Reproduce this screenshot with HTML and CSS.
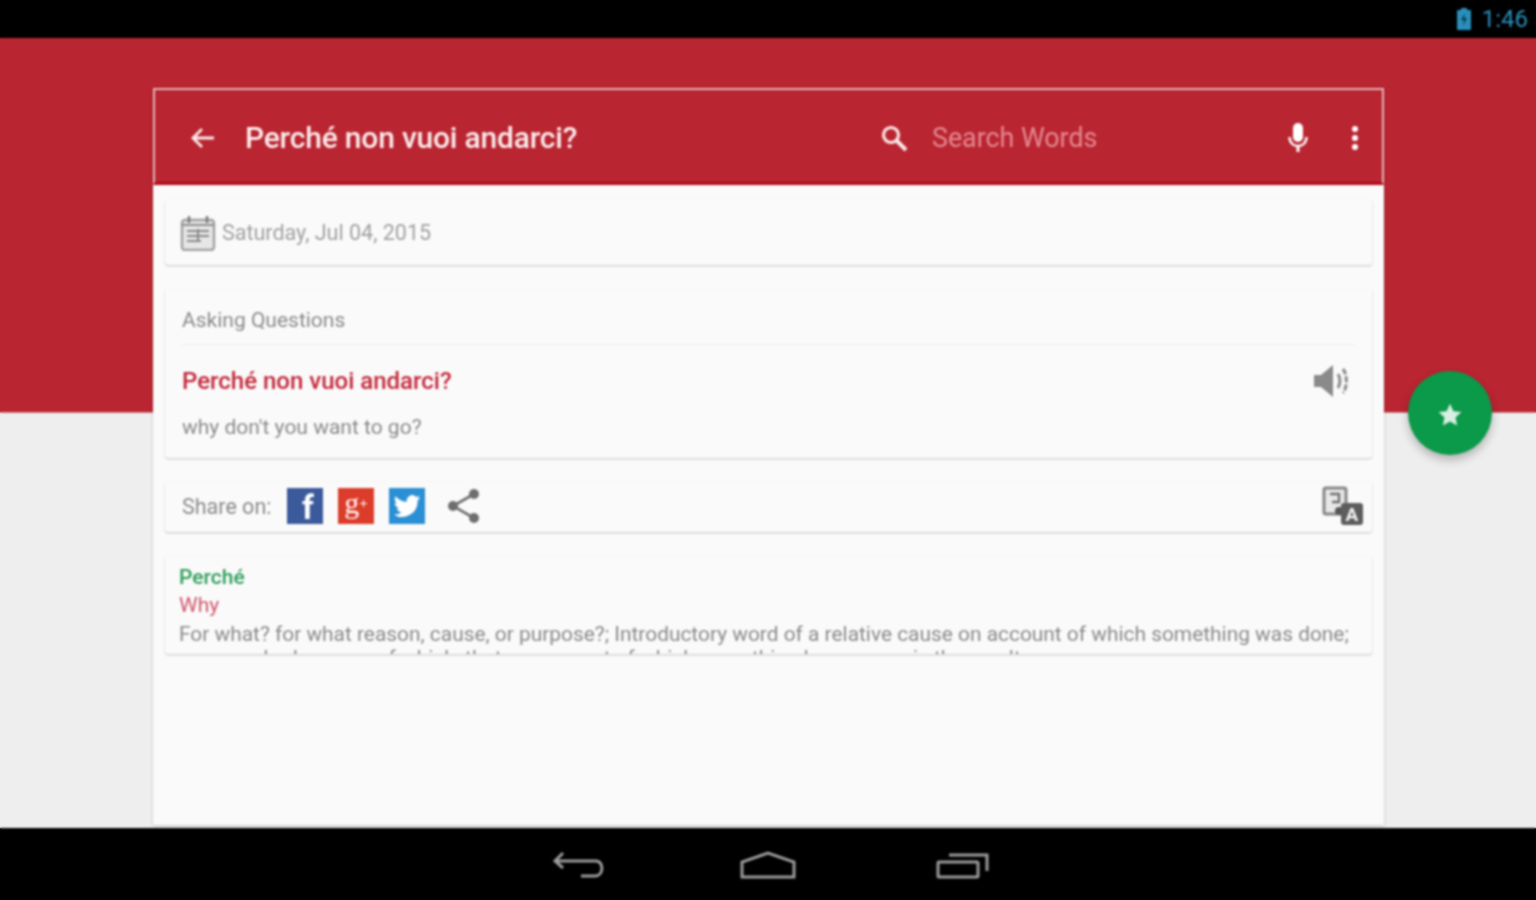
FILE: index.html
```html
<!DOCTYPE html>
<html lang="en">

<head>
    <meta charset="UTF-8">
    <meta name="viewport" content="width=device-width, initial-scale=1.0">
    <title>Perché non vuoi andarci?</title>
    <link rel="stylesheet" href="styles.css">
</head>

<body>

    <div class="screen">
        <div class="status-bar">
            <svg class="status-bar__battery" viewBox="0 0 16 24" width="16" height="24">
                <path d="M5 1h6v2h3a1 1 0 0 1 1 1v18a1 1 0 0 1-1 1H2a1 1 0 0 1-1-1V4a1 1 0 0 1 1-1h3z" fill="#2a8fbb" />
                <path d="M9 6 5 13h3l-1 6 4-8H8z" fill="#0b3a50" />
            </svg>
            <span class="status-bar__time">1:46</span>
        </div>

        <div class="content">
            <div class="panel">
                <div class="toolbar">
                    <svg class="toolbar__back" viewBox="0 0 28 24" width="28" height="24">
                        <path d="M25 12H5M13 3l-9 9 9 9" fill="none" stroke="#fbecec" stroke-width="2.800" />
                    </svg>
                    <div class="toolbar__title">Perché non vuoi andarci?</div>
                    <svg class="toolbar__search-icon" viewBox="0 0 30 30" width="30" height="30">
                        <circle cx="12" cy="12" r="7.500" fill="none" stroke="#fbe6e6" stroke-width="3.200" />
                        <path d="M17.500 17.500 27 27" stroke="#fbe6e6" stroke-width="4" />
                    </svg>
                    <div class="toolbar__search">Search Words</div>
                    <svg class="toolbar__mic" viewBox="0 0 24 32" width="24" height="32">
                        <rect x="7" y="1" width="10" height="19" rx="5" fill="#fff" />
                        <path d="M3.500 15c0 6 4 9 8.500 9s8.500-3 8.500-9" fill="none" stroke="#fff" stroke-width="2.400" />
                        <path d="M10.500 23h3v7h-3z" fill="#fff" />
                    </svg>
                    <div class="toolbar__more">
                        <span></span><span></span><span></span>
                    </div>
                </div>

                <div class="card card--date">
                    <svg class="date-icon" viewBox="0 0 36 36" width="36" height="36">
                        <rect x="2" y="5" width="32" height="30" rx="3" fill="#e6e6e6" stroke="#a0a0a0" stroke-width="2.400" />
                        <path d="M2 10h32" stroke="#8e8e8e" stroke-width="2" />
                        <path d="M9 1v7M27 1v7" stroke="#777" stroke-width="2.400" />
                        <path d="M7 16h22M7 21h22M7 26h14M18 14v12" stroke="#8a8a8a" stroke-width="2" />
                    </svg>
                    <span class="date-text">Saturday, Jul 04, 2015</span>
                </div>

                <div class="card card--phrase">
                    <div class="phrase-category">Asking Questions</div>
                    <div class="phrase-row">
                        <div class="phrase-text">Perché non vuoi andarci?</div>
                        <svg class="speaker" viewBox="0 0 38 34" width="38" height="34">
                            <path d="M1 11h7l12-10v32L8 23H1z" fill="#8a8a8a" />
                            <path d="M25 10c2.500 4 2.500 10 0 14" fill="none" stroke="#8a8a8a" stroke-width="3" />
                            <path d="M30 5c4.500 6 4.500 18 0 24" fill="none" stroke="#8a8a8a" stroke-width="3" stroke-dasharray="6 2" />
                        </svg>
                    </div>
                    <div class="phrase-meaning">why don't you want to go?</div>
                </div>

                <div class="card card--share">
                    <span class="share-label">Share on:</span>
                    <div class="share-icon share-icon--facebook">f</div>
                    <div class="share-icon share-icon--google">g<span class="share-icon__plus">+</span></div>
                    <div class="share-icon share-icon--twitter">
                        <svg viewBox="0 0 24 24" width="32" height="32">
                            <path d="M22 5.800c-.7.3-1.500.5-2.300.6.8-.5 1.500-1.300 1.800-2.200-.8.500-1.700.8-2.600 1a4.100 4.100 0 0 0-7 3.700C8.500 8.700 5.500 7.100 3.400 4.600a4.100 4.100 0 0 0 1.300 5.500c-.7 0-1.300-.2-1.900-.5 0 2 1.400 3.700 3.300 4.100-.6.200-1.200.2-1.800.1.500 1.600 2 2.800 3.800 2.800A8.300 8.300 0 0 1 2 18.300a11.600 11.600 0 0 0 17.900-10.300c.8-.6 1.500-1.300 2.100-2.200z" fill="#fff" />
                        </svg>
                    </div>
                    <svg class="share-generic" viewBox="0 0 36 36" width="36" height="36">
                        <path d="M28 6 7 18l21 12" fill="none" stroke="#6e6e6e" stroke-width="2.600" />
                        <circle cx="28" cy="6" r="5" fill="#6e6e6e" />
                        <circle cx="7" cy="18" r="5" fill="#6e6e6e" />
                        <circle cx="28" cy="30" r="5" fill="#6e6e6e" />
                    </svg>
                    <svg class="translate-icon" viewBox="0 0 42 40" width="42" height="40">
                        <rect x="2" y="2" width="22" height="26" rx="2" fill="#e8e8e8" stroke="#858585" stroke-width="3" />
                        <path d="M8 8h9v8H10" fill="none" stroke="#707070" stroke-width="2.400" />
                        <circle cx="17" cy="25" r="4" fill="#555" />
                        <rect x="19" y="17" width="22" height="22" rx="3" fill="#5d5d5d" />
                        <text x="30" y="35" class="translate-icon__letter">A</text>
                    </svg>
                </div>

                <div class="card card--word">
                    <div class="word-title">Perché</div>
                    <div class="word-translation">Why</div>
                    <div class="word-definition">For what? for what reason, cause, or purpose?; Introductory word of a relative cause on account of which something was done; reason why, because of which, that on account of which something happens or is the result</div>
                </div>
            </div>

            <div class="fab">
                <svg viewBox="0 0 24 24" width="26" height="26">
                    <path d="M12 1.500l3.200 7 7.300.8-5.400 5 1.500 7.400-6.600-3.800-6.600 3.800 1.500-7.400-5.400-5 7.300-.8z" fill="#d8efe2" />
                </svg>
            </div>
        </div>

        <div class="nav-bar">
            <svg viewBox="0 0 54 30" width="54" height="30">
                <path d="M11 2 3 10l8 7M4 10h40c8 0 8 15-1 15H29" fill="none" stroke="#9a9a9a" stroke-width="3" />
            </svg>
            <svg viewBox="0 0 56 30" width="56" height="30">
                <path d="M2 26V11L28 2l26 9v15z" fill="none" stroke="#9a9a9a" stroke-width="3" />
            </svg>
            <svg class="nav-bar__recents" viewBox="0 0 54 30" width="54" height="30">
                <rect x="2" y="11" width="40" height="15" rx="1" fill="none" stroke="#9a9a9a" stroke-width="3" />
                <path d="M13 4h38v16" fill="none" stroke="#9a9a9a" stroke-width="3" />
            </svg>
        </div>
    </div>

</body>

</html>
```

FILE: styles.css
```css
html,
body {
    margin: 0;
    height: 100%;
    overflow: hidden;
}

/* same bands as the screen, so the blur has no dark rim at the window edge */
body {
    background: linear-gradient(#000 0, #000 38px, #b92531 38px, #b92531 412px, #eeeeee 413px, #eeeeee 828px, #000 828px);
}

.screen {
    display: flex;
    flex-direction: column;
    height: 900px;
    font-family: Roboto, "Liberation Sans", sans-serif;
    filter: blur(0.9px);
}

.status-bar {
    display: flex;
    align-items: center;
    justify-content: flex-end;
    gap: 10px;
    height: 38px;
    padding-right: 8px;
    background: #000;
}

.status-bar__time {
    color: #2a8fbb;
    font-size: 24px;
}

.content {
    position: relative;
    flex: 1;
    background: linear-gradient(#b92531 0, #b92531 374px, #eeeeee 375px);
}

.panel {
    position: absolute;
    top: 50px;
    bottom: 3px;
    left: 153px;
    width: 1231px;
    box-sizing: border-box;
    background: #fafafa;
    box-shadow: 0 1px 3px rgba(0, 0, 0, 0.2);
}

.toolbar {
    display: flex;
    align-items: center;
    height: 97px;
    box-sizing: border-box;
    padding-top: 3px;
    border: 2px solid #e8b6ba;
    border-bottom: 3px solid #b00a1c;
    background: #b92531;
    margin-bottom: 15px;
}

.toolbar__back {
    margin-left: 34px;
}

.toolbar__title {
    margin-left: 28px;
    width: 634px;
    color: #fbecec;
    font-size: 30px;
    font-weight: 500;
    letter-spacing: -0.2px;
}

.toolbar__search {
    margin-left: 23px;
    width: 354px;
    color: #e58a92;
    font-size: 26.800px;
}

.toolbar__more {
    display: flex;
    flex-direction: column;
    gap: 3px;
    margin-left: 42px;
}

.toolbar__more span {
    width: 6px;
    height: 6px;
    border-radius: 50%;
    background: #fff;
}

.card {
    margin: 0 12px 24px;
    box-sizing: border-box;
    background: #fafafa;
    border-radius: 3px;
    box-shadow: 0 1px 2px rgba(0, 0, 0, 0.22);
}

.card--date {
    display: flex;
    align-items: center;
    height: 65px;
    padding-left: 15px;
}

.date-text {
    margin-left: 6px;
    color: #a0a0a0;
    font-size: 21.500px;
}

.card--phrase {
    height: 169px;
    padding: 0 17px;
}

.phrase-category {
    height: 56px;
    line-height: 62px;
    box-sizing: border-box;
    border-bottom: 1px solid #ececec;
    color: #8a8a8a;
    font-size: 21px;
}

.phrase-row {
    display: flex;
    align-items: center;
    justify-content: space-between;
    height: 72px;
    padding-right: 4px;
}

.phrase-text {
    color: #c4273a;
    font-size: 24px;
    font-weight: 500;
}

.phrase-meaning {
    margin-top: -2px;
    color: #8a8a8a;
    font-size: 21px;
}

.card--share {
    display: flex;
    align-items: center;
    height: 50px;
    padding: 0 0 2px 17px;
    box-sizing: border-box;
}

.share-label {
    width: 105px;
    color: #8a8a8a;
    font-size: 21.500px;
}

.share-icon {
    display: flex;
    align-items: center;
    justify-content: center;
    width: 36px;
    height: 36px;
    margin-right: 15px;
    color: #fff;
}

.share-icon--facebook {
    background: #3a5a9b;
    font-size: 33px;
    font-weight: 700;
    line-height: 36px;
    padding: 3px 0 0 6px;
    box-sizing: border-box;
}

.share-icon--google {
    background: #dc3c2a;
    font-family: "Liberation Serif", serif;
    font-size: 30px;
    line-height: 30px;
    box-sizing: border-box;
    padding-bottom: 6px;
}

.share-icon__plus {
    font-size: 15px;
    font-weight: 700;
}

.share-icon--twitter {
    background: #2a8fd4;
}

.share-generic {
    margin-left: 6px;
}

.translate-icon {
    margin-left: auto;
    margin-right: 8px;
}

.translate-icon__letter {
    fill: #f2f2f2;
    font-size: 19px;
    font-weight: 700;
    text-anchor: middle;
}

.card--word {
    height: 98px;
    padding: 7px 14px 0;
    overflow: hidden;
    font-size: 21px;
    line-height: 28px;
}

.word-title {
    color: #2f9e5b;
    font-weight: 500;
}

.word-translation {
    color: #d0566a;
}

.word-definition {
    margin-top: 3px;
    color: #8a8a8a;
    font-size: 20.900px;
    line-height: 24px;
}

.fab {
    position: absolute;
    top: 333px;
    left: 1408px;
    display: flex;
    align-items: center;
    justify-content: center;
    width: 84px;
    height: 84px;
    padding-top: 3px;
    box-sizing: border-box;
    border-radius: 50%;
    background: #0b994a;
    box-shadow: 0 5px 10px rgba(0, 0, 0, 0.25);
}

.nav-bar {
    display: flex;
    align-items: center;
    justify-content: center;
    gap: 134px;
    height: 72px;
    padding: 4px 0 0 5px;
    box-sizing: border-box;
    background: #000;
}

.nav-bar__recents {
    margin-left: 6px;
}
```
